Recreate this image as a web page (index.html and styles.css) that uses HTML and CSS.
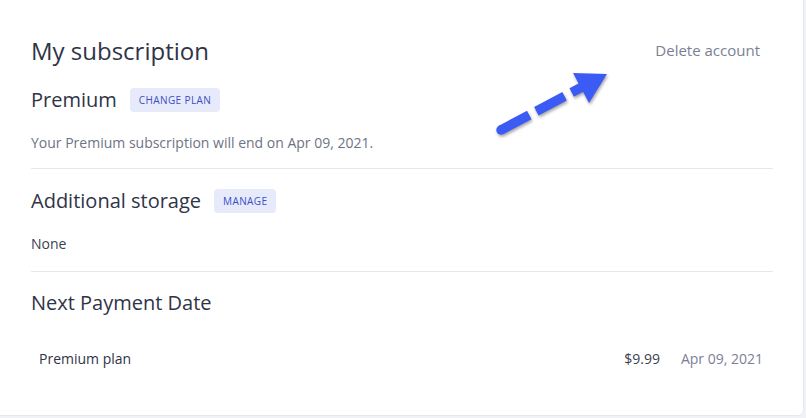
FILE: index.html
```html
<!DOCTYPE html>
<html lang="en">
<head>
    <meta charset="UTF-8">
    <meta name="viewport" content="width=device-width, initial-scale=1.0">
    <title>My subscription</title>
    <link rel="stylesheet" href="styles.css">
</head>
<body>
    <div class="card">
        <div class="card-header">
            <h1>My subscription</h1>
            <a href="#" class="delete-link">Delete account</a>
        </div>

        <div class="section">
            <div class="section-title">
                <h2>Premium</h2>
                <button class="tag">Change plan</button>
            </div>
            <p class="muted">Your Premium subscription will end on Apr 09, 2021.</p>
        </div>

        <div class="section">
            <div class="section-title">
                <h2>Additional storage</h2>
                <button class="tag">Manage</button>
            </div>
            <p>None</p>
        </div>

        <div class="section last">
            <div class="section-title">
                <h2>Next Payment Date</h2>
            </div>
            <div class="payment-row">
                <span class="plan-name">Premium plan</span>
                <span class="price">$9.99</span>
                <span class="date">Apr 09, 2021</span>
            </div>
        </div>

        <!-- annotation arrow pointing at the delete link -->
        <svg class="hint-arrow" width="130" height="85" viewBox="0 0 130 85">
            <line x1="11" y1="70" x2="92" y2="27" stroke="#3c5af4" stroke-width="9.5" stroke-dasharray="32 8 32 8 40"/>
            <circle cx="11" cy="70" r="4.75" fill="#3c5af4"/>
            <polygon points="117,14 83,13 99,43" fill="#3c5af4"/>
        </svg>
    </div>
</body>
</html>
```

FILE: styles.css
```css
:root {
    --heading-color: #2f3447;
    --text-color: #3a3f50;
    --muted-color: #6e7385;
    --light-color: #7b8094;
    --accent-color: #3a4ec4;
    --accent-bg: #e7eafa;
    --border-color: #e6e8ed;
}

body {
    margin: 0;
    background-color: #f1f2f5;
    font-family: 'Open Sans', 'Liberation Sans', sans-serif;
    color: var(--text-color);
}

.card {
    position: relative;
    margin: -6px 2px 0 -6px;
    padding: 40px 30px 46px 36px;
    background: white;
    border: 1px solid var(--border-color);
    border-radius: 6px;
}

.card-header {
    display: flex;
    justify-content: space-between;
    align-items: flex-start;
}

h1 {
    margin: 0;
    font-size: 24px;
    font-weight: 400;
    line-height: 32px;
    color: var(--heading-color);
}

.delete-link {
    margin: 5px 13px 0 0;
    font-size: 15px;
    line-height: 20px;
    color: var(--light-color);
    text-decoration: none;
}

.section {
    padding: 21px 0 15px;
    border-bottom: 1px solid var(--border-color);
}

.section + .section {
    padding-top: 20px;
    padding-bottom: 17px;
}

.section.last {
    border-bottom: none;
    padding-top: 19px;
    padding-bottom: 0;
}

.section-title {
    display: flex;
    align-items: center;
    gap: 13px;
}

h2 {
    margin: 0;
    font-size: 20px;
    font-weight: 400;
    line-height: 24px;
    color: var(--heading-color);
}

.tag {
    height: 24px;
    padding: 0 9px;
    border: none;
    border-radius: 4px;
    background: var(--accent-bg);
    color: var(--accent-color);
    font-family: inherit;
    font-size: 10px;
    font-weight: 500;
    letter-spacing: 0.4px;
    text-transform: uppercase;
    cursor: pointer;
}

p {
    margin: 21px 0 0;
    font-size: 14px;
    line-height: 20px;
}

.muted {
    color: var(--muted-color);
}

.payment-row {
    display: flex;
    align-items: center;
    gap: 21px;
    margin-top: 34px;
    padding: 0 10px 0 8px;
    font-size: 14px;
    line-height: 20px;
}

.plan-name {
    flex: 1;
    color: var(--heading-color);
}

.date {
    color: var(--light-color);
}

.hint-arrow {
    position: absolute;
    left: 495px;
    top: 65px;
    filter: drop-shadow(1px 2px 1.5px rgba(0, 0, 0, 0.35));
}
```
